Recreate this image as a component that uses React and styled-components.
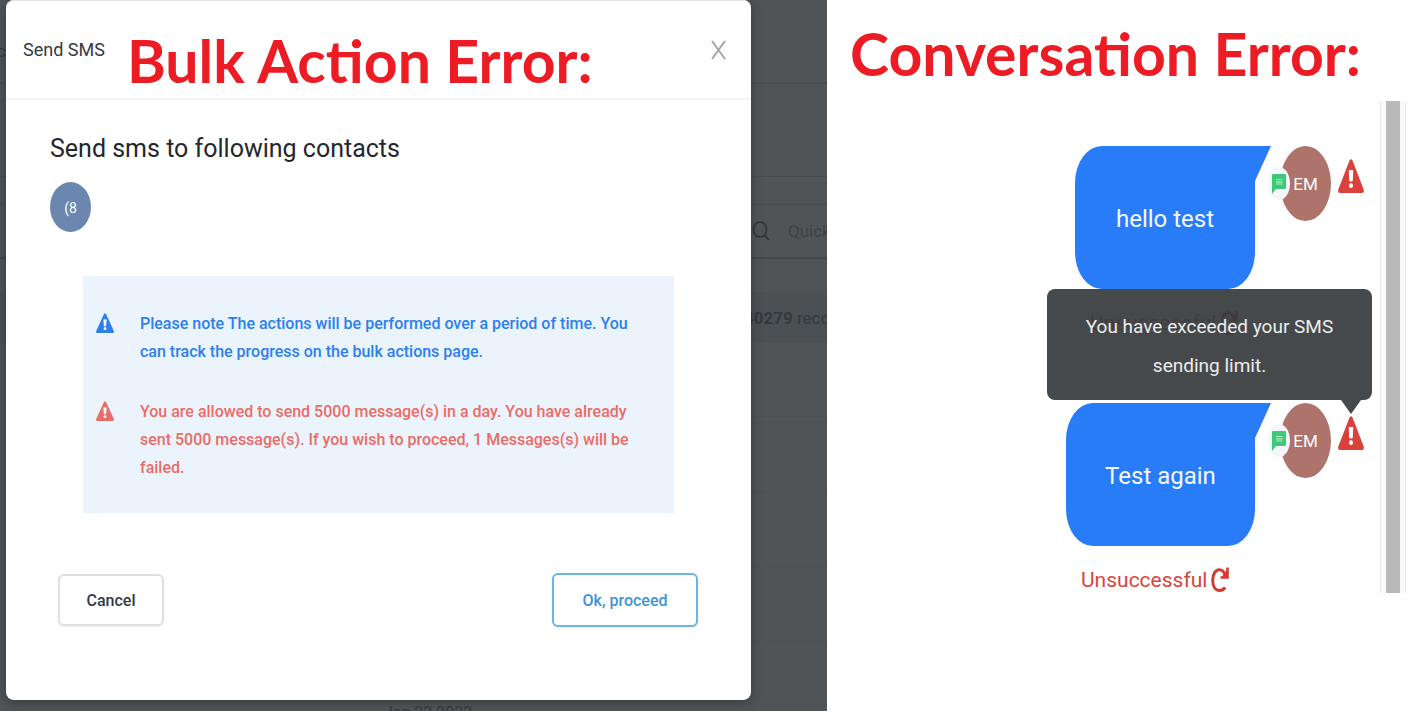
import React from "react";
import styled, { createGlobalStyle } from "styled-components";

const Global = createGlobalStyle`
  *, *::before, *::after { box-sizing: border-box; }
  body { margin: 0; background: #fff; }
  body, button, input { font-family: Roboto, "Liberation Sans", sans-serif; }
  h1, h2, h3, p { margin: 0; }
`;

const Page = styled.main`
  display: grid;
  grid-template-columns: 827fr 589fr;
  align-items: start;
`;

const Caption = styled.h1`
  font: 700 59px/72px Lato, sans-serif;
  color: #ed1c24;
  white-space: nowrap;
`;

/* Bulk action side */

const Stack = styled.section`
  display: grid;
  overflow: hidden;
  background: #505457;
  > * { grid-area: 1 / 1; min-width: 0; }
`;

const Backdrop = styled.div`
  display: flex;
  flex-direction: column;
  height: 0;
  color: #36393c;
  font-size: 17px;
`;

const TopBar = styled.div`
  flex: none;
  height: 84px;
  padding-top: 40px;
  line-height: 22px;
  text-indent: -3px;
  border-bottom: 2px solid #484c4f;
`;

const ToolBar = styled.div`
  flex: none;
  height: 93px;
  border-bottom: 1px solid #484c4f;
`;

const Search = styled.label`
  flex: none;
  display: flex;
  align-items: center;
  gap: 18px;
  height: 55px;
  margin-top: 27px;
  padding-left: 752px;
  border: solid #44484b;
  border-width: 1px 0 2px;
  input {
    flex: 1;
    min-width: 0;
    padding: 0;
    border: 0;
    background: none;
    font-size: 17px;
    color: inherit;
  }
  input::placeholder { color: #3e4246; opacity: 1; }
`;

const Records = styled.div`
  flex: none;
  height: 50px;
  margin-top: 33px;
  padding-left: 744px;
  line-height: 52px;
  white-space: nowrap;
  background: #4b5054;
`;

const Rows = styled.div`
  flex: none;
  height: 369px;
  padding: 360px 0 0 384px;
  font-size: 16px;
  line-height: 22px;
  background: repeating-linear-gradient(transparent 0 74px, #4d5154 74px 75px);
  overflow: hidden;
`;

const Dialog = styled.div`
  z-index: 1;
  margin: 0 76px 11px 6px;
  border-radius: 8px;
  background: #fff;
  box-shadow: 0 2px 12px rgba(0, 0, 0, 0.3), inset 0 1px #e4e6e8;
`;

const DialogHead = styled.header`
  display: flex;
  align-items: center;
  height: 100px;
  padding: 0 25px 0 17px;
  border-bottom: 2px solid #f1f5f9;
`;

const DialogTitle = styled.h2`
  width: 104px;
  font-size: 18px;
  font-weight: 400;
  color: #343a40;
  white-space: nowrap;
`;

const HeadCaption = styled(Caption)`
  padding-top: 24px;
`;

const Close = styled.button`
  margin-left: auto;
  display: flex;
  padding: 2px 0 0;
  border: 0;
  background: none;
`;

const DialogBody = styled.div`
  padding: 30px 53px 73px 44px;
`;

const Heading = styled.h3`
  font-size: 25px;
  line-height: 38px;
  font-weight: 400;
  color: #22282e;
`;

const Contact = styled.div`
  display: grid;
  place-items: center;
  width: 41px;
  height: 50px;
  margin-top: 14px;
  padding-top: 2px;
  border-radius: 50%;
  background: #6b87b0;
  color: #fff;
  font-size: 14px;
`;

const Notices = styled.div`
  display: flex;
  flex-direction: column;
  gap: 32px;
  margin: 44px 24px 0 33px;
  padding: 34px 32px 31px 13px;
  background: #ebf3fd;
`;

const Notice = styled.div`
  display: flex;
  align-items: flex-start;
  gap: 26px;
  color: ${(p) => p.$color};
  font-size: 16px;
  line-height: 28px;
  font-weight: 500;
  svg { flex: none; margin-top: 3px; }
`;

const Actions = styled.div`
  display: flex;
  justify-content: space-between;
  align-items: center;
  margin: 60px 0 0 8px;
`;

const Button = styled.button`
  width: ${(p) => (p.$primary ? 146 : 106)}px;
  height: ${(p) => (p.$primary ? 54 : 52)}px;
  border: 2px solid ${(p) => (p.$primary ? "#6fb3e0" : "#dde0e4")};
  border-radius: 6px;
  background: #fff;
  box-shadow: 0 1px 2px rgba(0, 0, 0, 0.08);
  color: ${(p) => (p.$primary ? "#3d94d6" : "#2f3a4a")};
  font-size: 16px;
  font-weight: 500;
`;

/* Conversation side */

const Conversation = styled.section`
  padding: 18px 10px 0 23px;
`;

const Feed = styled.div`
  display: flex;
  justify-content: flex-end;
  margin-top: 11px;
`;

const Messages = styled.div`
  flex: 1;
  display: flex;
  flex-direction: column;
  padding: 45px 16px 0 0;
`;

const Message = styled.article`
  display: flex;
  justify-content: flex-end;
  align-items: flex-start;
  height: ${(p) => p.$height}px;
`;

const BubbleColumn = styled.div`
  width: ${(p) => p.$width}px;
  margin-right: 25px;
`;

const Bubble = styled.p`
  position: relative;
  height: 143px;
  border-radius: 27px 0 27px 27px / 37px 0 37px 37px;
  background: #297cf7;
  color: #f4f8ff;
  font-size: 24px;
  line-height: 147px;
  text-align: center;
  &::after {
    content: "";
    position: absolute;
    left: 100%;
    top: 0;
    width: 16px;
    height: 35px;
    background: inherit;
    clip-path: polygon(0 0, 100% 0, 0 100%);
  }
`;

const Status = styled.div`
  display: flex;
  align-items: center;
  gap: 4px;
  margin: 19px 0 0 15px;
  color: #d9443c;
  font-size: 21px;
  line-height: 30px;
`;

const Retry = styled.button`
  display: flex;
  padding: 0;
  border: 0;
  background: none;
  color: #d23a32;
`;

const Avatar = styled.div`
  position: relative;
  display: grid;
  place-items: center;
  width: 51px;
  height: 75px;
  border-radius: 50%;
  background: #ae746b;
  color: #fff;
  font-size: 17px;
`;

const Badge = styled.span`
  position: absolute;
  left: -12px;
  top: 21px;
  display: grid;
  place-items: center;
  width: 22px;
  height: 33px;
  border-radius: 50%;
  background: #f4f6fb;
`;

const Alert = styled.div`
  position: relative;
  margin: 13px 0 0 7px;
  color: #d9413a;
  svg { display: block; }
`;

const Tooltip = styled.div`
  position: absolute;
  right: -8px;
  bottom: calc(100% + 16px);
  width: 325px;
  padding: 18px 24px 15px;
  border-radius: 8px;
  background: rgba(55, 59, 62, 0.93);
  color: #eceded;
  font-size: 19px;
  line-height: 39px;
  text-align: center;
  &::after {
    content: "";
    position: absolute;
    right: 11px;
    top: 100%;
    border: solid transparent;
    border-width: 14px 10px 0;
    border-top-color: #45494c;
  }
`;

const ScrollTrack = styled.div`
  width: 26px;
  height: 492px;
  padding: 0 5px;
  border: solid #e6e8ea;
  border-width: 0 1px;
  background: #fafafa;
`;

const ScrollThumb = styled.div`
  width: 14px;
  height: 100%;
  background: #b9b9b9;
`;

const WarnIcon = ({ width, height }) => (
  <svg width={width} height={height} viewBox="0 0 26 34" preserveAspectRatio="none" aria-hidden="true">
    <path d="M11.5 1.5Q13-1 14.5 1.5L25.7 30.5Q26.5 34 24 34H2Q-.5 34 .3 30.5Z" fill="currentColor" />
    <path d="M11.2 11.5h3.6l-.6 10.5h-2.4Z" fill="#fff" stroke="#fff" strokeWidth="1" strokeLinejoin="round" />
    <ellipse cx="13" cy="26.5" rx="2" ry="2.6" fill="#fff" />
  </svg>
);

const ChatIcon = () => (
  <svg width="14" height="20" viewBox="0 0 14 20" aria-hidden="true">
    <path d="M0 1Q0 0 1 0H13Q14 0 14 1V14Q14 15 13 15H4L0 20Z" fill="#3fc977" />
    <path d="M4 5.5H10.5M4 7.8H10.5M4 10H10.5" stroke="#b5ecc9" strokeWidth="1.2" />
  </svg>
);

const RetryIcon = () => (
  <svg width="18" height="26" viewBox="0 0 18 26" fill="none" stroke="currentColor" strokeWidth="3" aria-hidden="true">
    <path d="M14.5 8.5C13 4.5 11 2.8 8.5 2.8C4.5 2.8 1.7 7 1.7 13C1.7 19.5 4.5 23.5 8.5 23.5C11 23.5 12.500 22.7 14.2 20.5" />
    <path d="M16.5 .5V10.5H9.5" strokeWidth="2.6" />
    <path d="M16.5 2V10.5H10.5Z" fill="currentColor" stroke="none" />
  </svg>
);

const ChatMessage = ({ text, width, height, tooltip }) => (
  <Message $height={height}>
    <BubbleColumn $width={width}>
      <Bubble>{text}</Bubble>
      <Status>
        Unsuccessful
        <Retry aria-label="Retry"><RetryIcon /></Retry>
      </Status>
    </BubbleColumn>
    <Avatar>
      EM
      <Badge><ChatIcon /></Badge>
    </Avatar>
    <Alert>
      <WarnIcon width={26} height={34} />
      {tooltip && <Tooltip role="tooltip">{tooltip}</Tooltip>}
    </Alert>
  </Message>
);

export default function App() {
  return (
    <>
      <Global />
      <Page>
        <Stack>
          <Backdrop>
            <TopBar>c</TopBar>
            <ToolBar />
            <Search>
              <svg width="18" height="20" viewBox="0 0 18 20" fill="none" stroke="currentColor" strokeWidth="2" aria-hidden="true">
                <ellipse cx="8" cy="8.5" rx="6.5" ry="7.5" />
                <path d="M12.5 14L17 19" />
              </svg>
              <input aria-label="Quick search" placeholder="Quick search" />
            </Search>
            <Records><b>40279</b> records</Records>
            <Rows>Jan 22 2022</Rows>
          </Backdrop>
          <Dialog role="dialog" aria-label="Send SMS">
            <DialogHead>
              <DialogTitle>Send SMS</DialogTitle>
              <HeadCaption>Bulk Action Error:</HeadCaption>
              <Close aria-label="Close">
                <svg width="15" height="20" viewBox="0 0 15 20" stroke="#a0a6aa" strokeWidth="2" aria-hidden="true">
                  <path d="M1 1L14 19M14 1L1 19" />
                </svg>
              </Close>
            </DialogHead>
            <DialogBody>
              <Heading>Send sms to following contacts</Heading>
              <Contact>(8</Contact>
              <Notices>
                <Notice $color="#2b80ee">
                  <WarnIcon width={18} height={20} />
                  <p>Please note The actions will be performed over a period of time. You can track the progress on the bulk actions page.</p>
                </Notice>
                <Notice $color="#ea6c66">
                  <WarnIcon width={18} height={20} />
                  <p>You are allowed to send 5000 message(s) in a day. You have already sent 5000 message(s). If you wish to proceed, 1 Messages(s) will be failed.</p>
                </Notice>
              </Notices>
              <Actions>
                <Button>Cancel</Button>
                <Button $primary>Ok, proceed</Button>
              </Actions>
            </DialogBody>
          </Dialog>
        </Stack>
        <Conversation>
          <Caption>Conversation Error:</Caption>
          <Feed>
            <Messages>
              <ChatMessage text="hello test" width={180} height={257} />
              <ChatMessage text="Test again" width={189} height={190} tooltip="You have exceeded your SMS sending limit." />
            </Messages>
            <ScrollTrack><ScrollThumb /></ScrollTrack>
          </Feed>
        </Conversation>
      </Page>
    </>
  );
}
